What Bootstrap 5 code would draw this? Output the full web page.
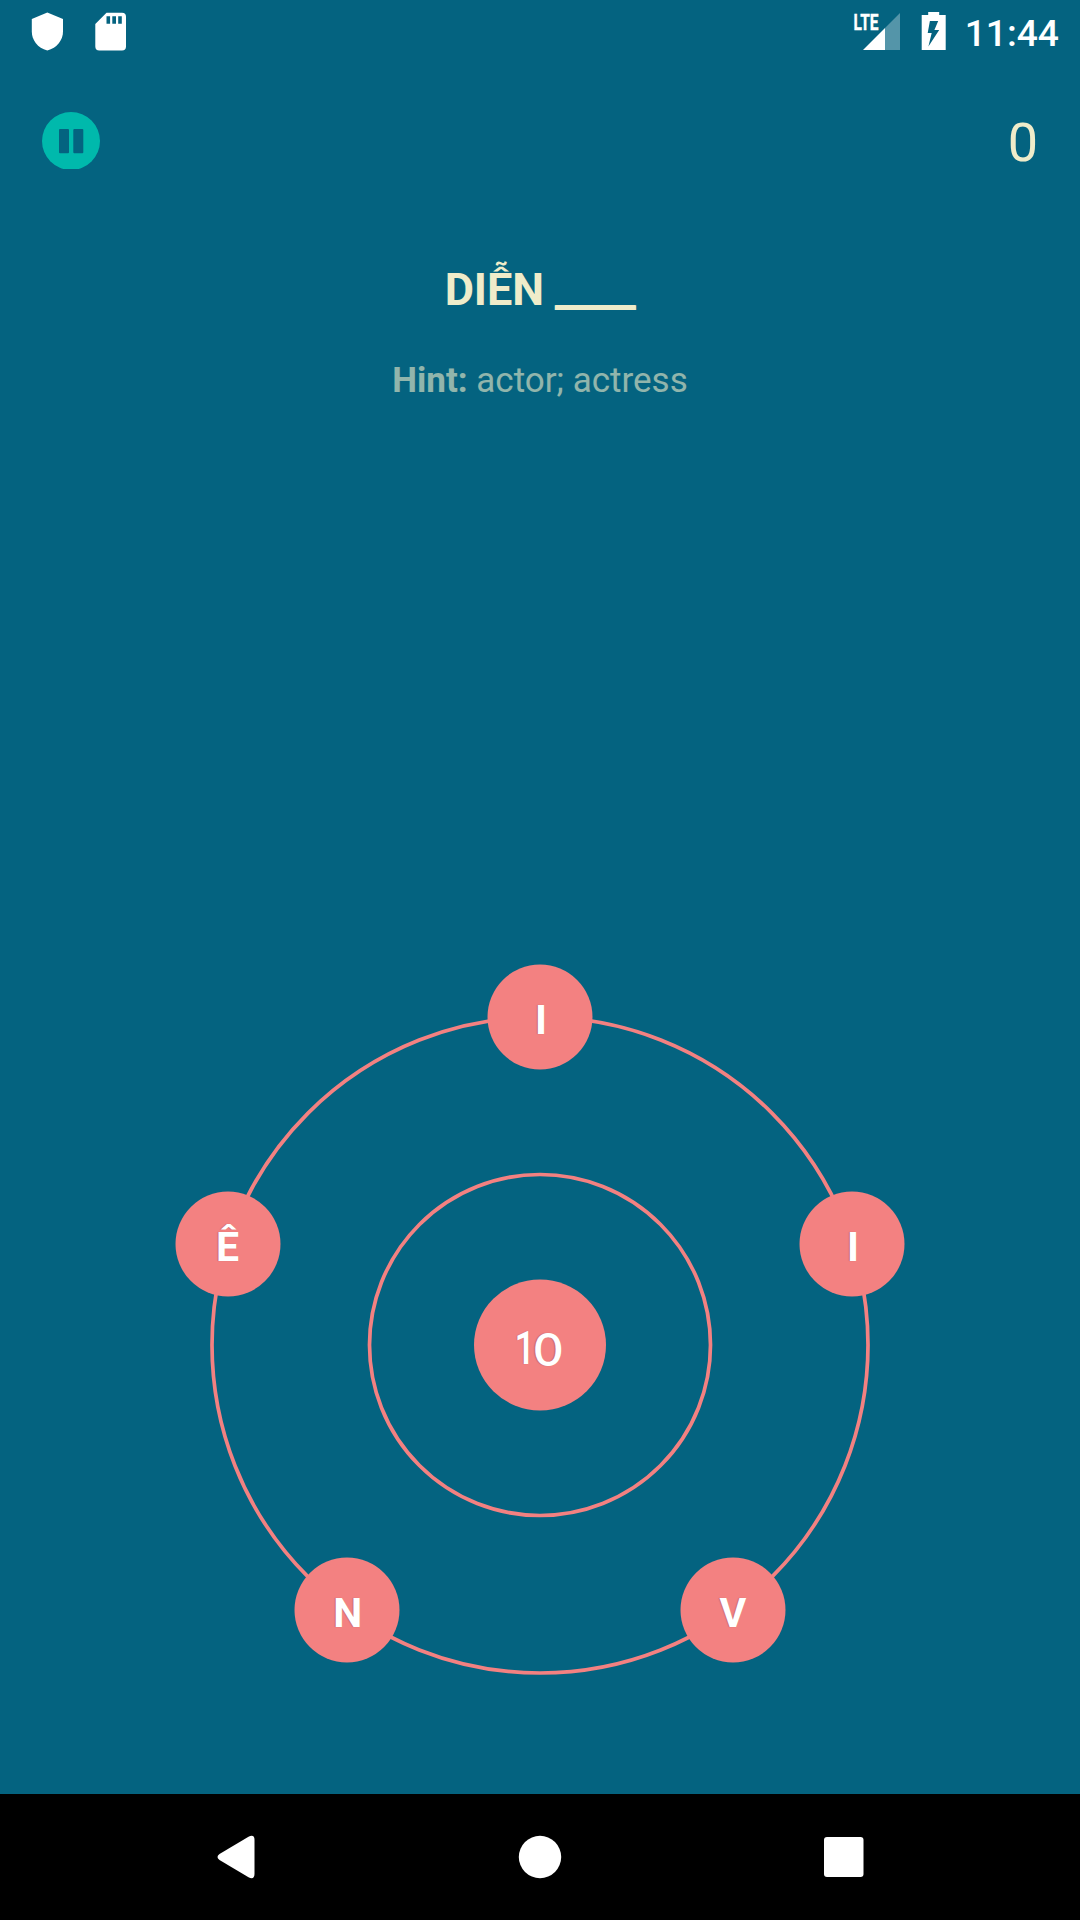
<!DOCTYPE html>
<html lang="vi">
<head>
<meta charset="utf-8">
<meta name="viewport" content="width=device-width, initial-scale=1">
<title>Word game</title>
<link href="https://cdn.jsdelivr.net/npm/bootstrap@5.3.0/dist/css/bootstrap.min.css" rel="stylesheet">
<style>
  body { font-family: Roboto, "Noto Sans", sans-serif; background: #046380; }
  svg { display: block; flex: none; }
  .screen { width: 1080px; height: 1920px; background: #046380; color: #efecca; }
  .status-bar { height: 66px; padding: 0 21px 0 31px; color: #fff; }
  .status-bar svg { margin-top: 12px; overflow: visible; }
  .status-left { gap: 32px; }
  .battery { margin-left: 21px; }
  .clock { font-size: 37.2px; font-weight: 500; line-height: 66px; margin-left: 19px; }
  .top-bar { height: 150px; padding: 46px 42px 0 42px; }
  .score { font-size: 54px; line-height: 62px; }
  .pause-btn { line-height: 0; }
  .word { font-size: 45px; font-weight: 700; line-height: 60px; margin-top: 44px; }
  .blank { text-shadow: .6px 0 0 #efecca, -.6px 0 0 #efecca; }
  .hint { font-size: 35px; line-height: 46px; margin-top: 38px; opacity: .6; }
  .board { width: 732px; height: 712px; margin-top: 560px; }
  .node { width: 105px; height: 105px; background: #f38181; color: #fff; font-size: 41px; font-weight: 700; line-height: 1; padding-top: 6px; text-shadow: -1px 0 1px rgba(90,50,60,.28); transform: translate(-50%, -50%); }
  .node-top { left: 366px; top: 53px; padding-left: 2px; }
  .node-right { left: 678px; top: 279.5px; padding-left: 2px; }
  .node-low-right { left: 558.8px; top: 646.4px; }
  .node-low-left { left: 173.2px; top: 646.4px; padding-left: 1px; }
  .node-left { left: 54px; top: 279.5px; padding-right: 1px; }
  .node-core { left: 366px; top: 381px; width: 132px; height: 131px; font-size: 45.5px; font-weight: 500; padding-top: 7px; }
  .node-core .narrow { transform: scaleX(.8); margin-right: -2.5px; margin-left: -6px; }
  .node-core .wide { font-family: Lato, sans-serif; font-size: 45.5px; font-weight: 600; transform: scaleX(1.08); }
  .nav-keys { height: 126px; background: #000; padding: 0 216px 0 217px; }
</style>
</head>
<body>
<main class="screen d-flex flex-column overflow-hidden">
  <header class="status-bar d-flex justify-content-between align-items-start">
    <div class="status-left d-flex">
      <svg width="32" height="39" viewBox="0 0 32 39" fill="#fff"><path d="M16.300.5 32 7v12.500C32 28 26 36 16.300 38.500 6.500 36 .8 28 .8 19.500V7z"/></svg>
      <svg width="32" height="39" viewBox="0 0 32 39"><path fill="#fff" fill-rule="evenodd" d="M11.500.7H27a4 4 0 0 1 4 4v29.800a4 4 0 0 1-4 4H4.300a4 4 0 0 1-4-4V12zM11.500 4.300v7.500h3.600V4.300zM17.300 4.300v7.500H21V4.300zM23.200 4.300v7.500h3.600V4.300z"/></svg>
    </div>
    <div class="d-flex">
      <svg width="47" height="39" viewBox="0 0 47 39">
        <path fill="#fff" fill-opacity=".32" d="M32 16 47 1v37H32z"/>
        <path fill="#fff" d="M10 38 32 16v22z"/>
        <text x=".5" y="18" fill="#fff" stroke="#fff" stroke-width=".4" font-family="Roboto, sans-serif" font-size="22.500" font-weight="700" textLength="25" lengthAdjust="spacingAndGlyphs">LTE</text>
      </svg>
      <svg class="battery" width="25" height="39" viewBox="0 0 25 39"><path fill="#fff" fill-rule="evenodd" d="M7.200 0h11v3h6.500v35H.7V3h6.500zM8.900 9 6.700 21h4l-3.300 13.500L18.200 18h-4.800L17.200 9z"/></svg>
      <span class="clock">11:44</span>
    </div>
  </header>

  <section class="top-bar d-flex justify-content-between align-items-start">
    <button class="pause-btn btn p-0 border-0" type="button" aria-label="Pause">
      <svg width="58" height="57" viewBox="0 0 58 57"><circle cx="29" cy="29" r="29" fill="#00b9ac"/><g fill="#046380"><rect x="17" y="17" width="10" height="24.300" rx="1"/><rect x="31.300" y="17" width="10" height="24.300" rx="1"/></g></svg>
    </button>
    <span class="score">0</span>
  </section>

  <section class="text-center">
    <div class="word">DIỄN <span class="blank">____</span></div>
    <div class="hint"><b>Hint:</b> actor; actress</div>
  </section>

  <section class="board position-relative align-self-center flex-shrink-0">
    <svg width="732" height="712" viewBox="0 0 732 712" fill="none" stroke="#f38181" stroke-width="3.700"><circle cx="366" cy="381" r="328"/><circle cx="366" cy="381" r="170.500"/></svg>
    <div class="node node-top position-absolute rounded-circle d-flex align-items-center justify-content-center">I</div>
    <div class="node node-right position-absolute rounded-circle d-flex align-items-center justify-content-center">I</div>
    <div class="node node-low-right position-absolute rounded-circle d-flex align-items-center justify-content-center">V</div>
    <div class="node node-low-left position-absolute rounded-circle d-flex align-items-center justify-content-center">N</div>
    <div class="node node-left position-absolute rounded-circle d-flex align-items-center justify-content-center">Ê</div>
    <div class="node node-core position-absolute rounded-circle d-flex align-items-center justify-content-center"><span class="narrow">1</span><span class="wide">0</span></div>
  </section>

  <nav class="nav-keys d-flex justify-content-between align-items-center mt-auto flex-shrink-0">
    <svg width="38" height="44" viewBox="0 0 38 44"><path fill="#fff" d="M31.500 1.700Q37.500-1 37.500 5v34q0 6-6 3.300L2.500 25q-4-3 0-6z"/></svg>
    <svg width="44" height="44" viewBox="0 0 44 44"><circle cx="22" cy="22" r="21.200" fill="#fff"/></svg>
    <svg width="40" height="40" viewBox="0 0 40 40"><rect width="39.500" height="40" rx="3" fill="#fff"/></svg>
  </nav>
</main>
<script src="https://cdn.jsdelivr.net/npm/bootstrap@5.3.0/dist/js/bootstrap.bundle.min.js"></script>
</body>
</html>
